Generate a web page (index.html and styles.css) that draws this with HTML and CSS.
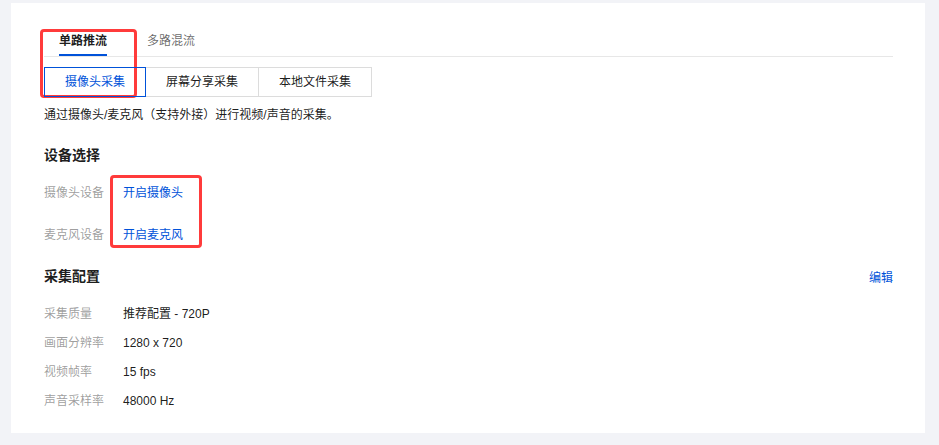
FILE: index.html
```html
<!DOCTYPE html>
<html lang="zh-CN">
<head>
    <meta charset="UTF-8">
    <meta name="viewport" content="width=device-width, initial-scale=1.0">
    <title>推流设置</title>
    <link rel="stylesheet" href="styles.css">
</head>
<body>
    <div class="card">
        <div class="tabs">
            <div class="tab active">单路推流</div>
            <div class="tab">多路混流</div>
        </div>

        <div class="radio-group">
            <div class="radio-btn active">摄像头采集</div>
            <div class="radio-btn">屏幕分享采集</div>
            <div class="radio-btn">本地文件采集</div>
        </div>

        <p class="desc">通过摄像头/麦克风（支持外接）进行视频/声音的采集。</p>

        <h3 class="section-title">设备选择</h3>
        <div class="device-row">
            <span class="label">摄像头设备</span>
            <a class="link" href="#">开启摄像头</a>
        </div>
        <div class="device-row">
            <span class="label">麦克风设备</span>
            <a class="link" href="#">开启麦克风</a>
        </div>

        <div class="section-head">
            <h3 class="section-title">采集配置</h3>
            <a class="link" href="#">编辑</a>
        </div>
        <div class="info-row">
            <span class="label">采集质量</span>
            <span class="value">推荐配置 - 720P</span>
        </div>
        <div class="info-row">
            <span class="label">画面分辨率</span>
            <span class="value">1280 x 720</span>
        </div>
        <div class="info-row">
            <span class="label">视频帧率</span>
            <span class="value">15 fps</span>
        </div>
        <div class="info-row">
            <span class="label">声音采样率</span>
            <span class="value">48000 Hz</span>
        </div>

        <!-- annotation boxes -->
        <div class="mark mark-tabs"></div>
        <div class="mark mark-devices"></div>
    </div>
</body>
</html>
```

FILE: styles.css
```css
/* General Styling */
body {
    font-family: 'Liberation Sans', 'Noto Sans CJK SC', sans-serif;
    font-size: 12px;
    margin: 0;
    padding: 3px 14px 12px 11px;
    background-color: #f2f3f7;
    color: rgba(0, 0, 0, 0.9);
}

a {
    text-decoration: none;
}

.card {
    position: relative;
    background-color: white;
    height: 430px;
    box-sizing: border-box;
    padding: 24px 32px 0 33px;
}

/* Tabs */
.tabs {
    display: flex;
    gap: 10px;
    border-bottom: 1px solid #e7e7e7;
}

.tab {
    position: relative;
    padding: 0 15px;
    line-height: 29px;
    color: rgba(0, 0, 0, 0.6);
}

.tab.active {
    color: rgba(0, 0, 0, 0.9);
    font-weight: 600;
}

.tab.active::after {
    content: '';
    position: absolute;
    left: 15px;
    right: 15px;
    bottom: 0;
    height: 2px;
    background-color: #0052d9;
}

/* Radio buttons */
.radio-group {
    display: flex;
    margin-top: 10px;
}

.radio-btn {
    border: 1px solid #dcdcdc;
    padding: 0 20px;
    line-height: 28px;
    margin-left: -1px;
    color: rgba(0, 0, 0, 0.9);
}

.radio-btn:first-child {
    margin-left: 0;
}

.radio-btn.active {
    position: relative;
    border-color: #0052d9;
    color: #0052d9;
    z-index: 1;
}

.desc {
    margin: 8px 0 0;
    line-height: 20px;
}

/* Sections */
.section-title {
    margin: 0;
    font-size: 14px;
    font-weight: 600;
    line-height: 22px;
}

.desc + .section-title {
    margin-top: 19px;
}

.device-row {
    display: flex;
    line-height: 20px;
    margin-top: 17px;
}

.device-row + .device-row {
    margin-top: 22px;
}

.section-head {
    display: flex;
    justify-content: space-between;
    align-items: center;
    margin-top: 20px;
}

.info-row {
    display: flex;
    line-height: 20px;
    margin-top: 9px;
}

.section-head + .info-row {
    margin-top: 17px;
}

.label {
    width: 79px;
    color: rgba(0, 0, 0, 0.4);
}

.link {
    color: #0052d9;
}

/* Red annotation frames */
.mark {
    position: absolute;
    border: 3px solid #ff3b3b;
    border-radius: 4px;
}

.mark-tabs {
    left: 29px;
    top: 26px;
    width: 91px;
    height: 63px;
}

.mark-devices {
    left: 99px;
    top: 172px;
    width: 86px;
    height: 67px;
}
```
